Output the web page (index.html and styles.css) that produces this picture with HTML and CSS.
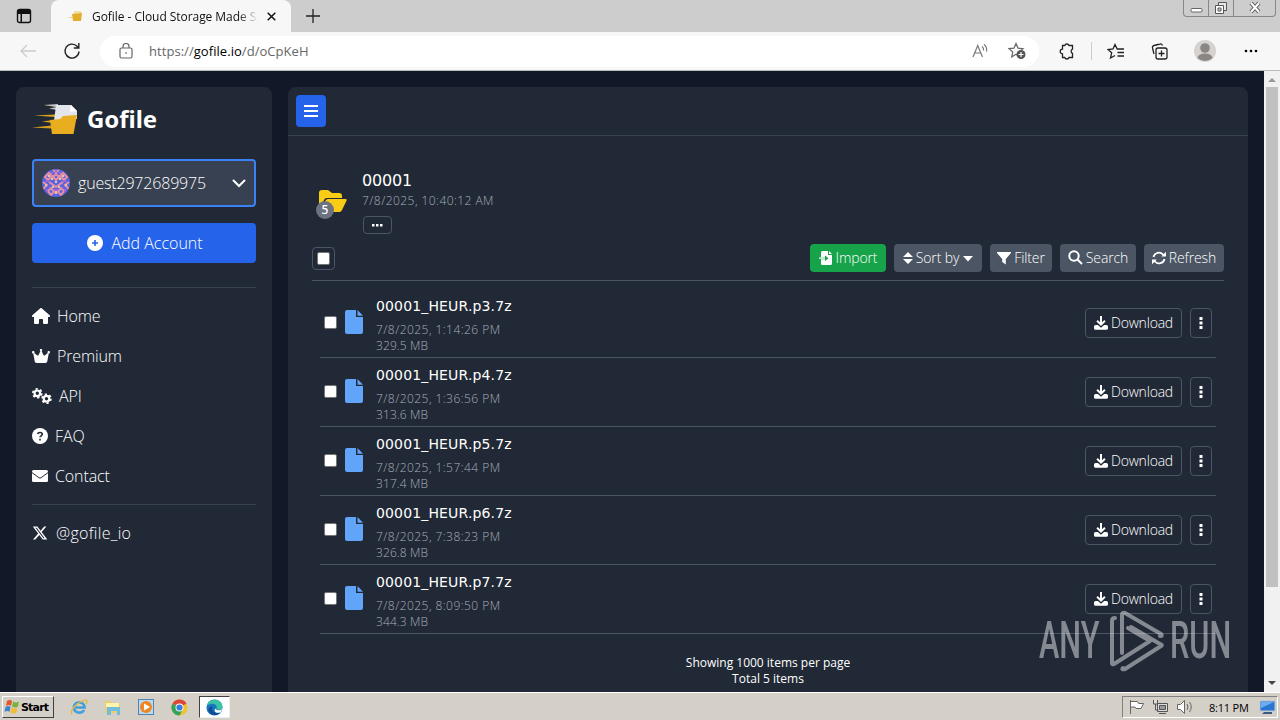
FILE: index.html
```html
<!DOCTYPE html>
<html lang="en">
<head>
    <meta charset="UTF-8">
    <meta name="viewport" content="width=device-width, initial-scale=1.0">
    <title>Gofile - Cloud Storage Made Simple</title>
    <link rel="stylesheet" href="styles.css">
</head>
<body>
    <!-- Shared icons -->
    <svg class="sprite">
        <symbol id="logo" viewBox="0 0 46 32">
            <path d="M12 2L26 2.400L24 4zM2 12.500L23 11.500V14zM10 18.500L21 17V20zM0 24.500L20 22.500V25.500z" fill="#d9a11d"/>
            <path d="M12 2L26 1V4zM17 5.500L25 4V7z" fill="#bfc5cd"/>
            <path d="M24 2H39L45 8V16L22 18z" fill="#e3e5ec"/>
            <path d="M39 2L38 9L45 8z" fill="#fff"/>
            <path d="M18 17L28 16L31 13L45 12L41.500 31H20z" fill="#e9ae20"/>
        </symbol>
        <symbol id="file" viewBox="0 0 18 24">
            <path d="M2 0H11V7H18V22a2 2 0 0 1-2 2H2a2 2 0 0 1-2-2V2a2 2 0 0 1 2-2zM12.500 0L18 5.700H12.500z"/>
        </symbol>
        <symbol id="download" viewBox="0 0 14 14">
            <path d="M6 0h2v6.300l2.300-2.200 1.300 1.300L7 9.900 2.400 5.400l1.300-1.300L6 6.300zM1.600 9h2.300L7 11.700 10.100 9h2.300A1.600 1.600 0 0 1 14 10.600v1.600a1.600 1.600 0 0 1-1.600 1.600H1.600A1.600 1.600 0 0 1 0 12.200v-1.600A1.600 1.600 0 0 1 1.600 9z"/>
        </symbol>
        <symbol id="dots" viewBox="0 0 4 12">
            <path d="M.5 0h3v3h-3zM.5 4.500h3v3h-3zM.5 9h3v3h-3z"/>
        </symbol>
    </svg>

    <!-- Browser tabs -->
    <div class="tabs">
        <svg class="tab-menu" width="16" height="16" viewBox="0 0 16 16"><rect x="1.500" y="1.500" width="13" height="13" rx="2" fill="none" stroke="#111" stroke-width="1.400"/><path d="M1 2h14v4H6v9H4.500V6H1z" fill="#111"/></svg>
        <div class="tab">
            <svg width="14" height="12" viewBox="0 0 14 12"><path d="M5 1h7l1 3H5z" fill="#f0dfa8"/><path d="M3 4l10-1-1 8H4z" fill="#e2ad2d"/><path d="M0 7h4v1H0z" fill="#efd287"/></svg>
            <span class="tab-title">Gofile - Cloud Storage Made Si</span>
            <svg class="tab-close" width="9" height="9" viewBox="0 0 9 9"><path d="M.7.7l7.600 7.600M8.300.7L.7 8.300" stroke="#111" stroke-width="1.500"/></svg>
        </div>
        <svg class="tab-new" width="14" height="14" viewBox="0 0 14 14"><path d="M7 0v14M0 7h14" stroke="#222" stroke-width="1.300"/></svg>
        <div class="win-buttons">
            <span class="wb"><svg width="13" height="16" viewBox="0 0 13 16"><rect x="1" y="8.500" width="11" height="3.500" rx="1" fill="#fff" stroke="#666"/></svg></span>
            <span class="wb"><svg width="14" height="16" viewBox="0 0 14 16"><path d="M4.500 2.500h8v8h-8z" fill="#e8e8e8" stroke="#555"/><path d="M1.500 5.500h8v8h-8z" fill="#fff" stroke="#555"/><path d="M4 8h3v3H4z" fill="#ccc" stroke="#555"/></svg></span>
            <span class="wb wb-close"><svg width="14" height="16" viewBox="0 0 14 16"><path d="M3 3l8 9M11 3l-8 9" stroke="#555" stroke-width="4"/><path d="M3 3l8 9M11 3l-8 9" stroke="#fff" stroke-width="2"/></svg></span>
        </div>
    </div>

    <!-- Browser toolbar -->
    <div class="toolbar">
        <svg class="back" width="16" height="14" viewBox="0 0 16 14" fill="none" stroke="#ccc" stroke-width="1.300"><path d="M16 7H1M7 1L1 7l6 6"/></svg>
        <svg class="reload" width="18" height="18" viewBox="0 0 18 18" fill="none" stroke="#222" stroke-width="1.400"><path d="M16 9.500A7 7 0 1 1 14.300 4.500L15.800 6M15.800 1v5h-5"/></svg>
        <div class="address">
            <svg width="14" height="16" viewBox="0 0 14 16" fill="none" stroke="#666" stroke-width="1.200"><rect x="1" y="5" width="12" height="10" rx="1.500"/><path d="M4 5V3.500a3 3 0 0 1 6 0V5"/><path d="M6.300 10h1.400" stroke-width="1.500"/></svg>
            <span class="url">https://<b>gofile.io</b>/d/oCpKeH</span>
            <svg width="17" height="16" viewBox="0 0 17 16" fill="none" stroke="#777" stroke-width="1.200"><path d="M1 14L5.700 2.500 10.500 14M2.700 10h6M10 3.500a4 4 0 0 1 1.500 4M12 1.500a7 7 0 0 1 2.500 7"/></svg>
            <svg class="star" width="18" height="18" viewBox="0 0 18 18"><path d="M8 1.500l2 4.600 5 .5-3.800 3.300 1 4.800L8 12.200 3.700 15l1.100-5L1 6.600l5-.5z" fill="none" stroke="#666" stroke-width="1.200"/><circle cx="13" cy="12.500" r="4.500" fill="#555"/><path d="M13 10v5M10.500 12.500h5" stroke="#fff" stroke-width="1.200"/></svg>
        </div>
        <svg class="ext" width="16" height="17" viewBox="0 0 16 17" fill="none" stroke="#222" stroke-width="1.300"><path d="M3.500 2.500h2.200a2.300 2.300 0 0 1 4.300 0h3.500v3.700a2.300 2.300 0 0 0 0 4.200v4.100H10a2.300 2.300 0 0 1-4.300 0H3.500v-3.700a2.300 2.300 0 0 1 0-4.600z"/></svg>
        <span class="bar-sep"></span>
        <svg class="fav" width="18" height="17" viewBox="0 0 18 17" fill="none" stroke="#222" stroke-width="1.300"><path d="M11 6h-.8L8 1.500 6 6l-5 .6 3.700 3.200L3.500 15 8 12.500M10 6h7M10.500 9.500H17M10.500 13H17"/></svg>
        <svg class="coll" width="17" height="17" viewBox="0 0 17 17" fill="none" stroke="#222" stroke-width="1.300"><path d="M3 11L1.500 5A2 2 0 0 1 3 2.500L9 1a2 2 0 0 1 2.500 1.500"/><rect x="5" y="5" width="11" height="11" rx="2"/><path d="M10.500 7.500v6M7.500 10.500h6"/></svg>
        <svg class="profile" width="22" height="22" viewBox="0 0 22 22"><circle cx="11" cy="11" r="11" fill="#d5d2cf"/><circle cx="11" cy="8" r="4.800" fill="#898684"/><path d="M3.500 18a7.500 4.500 0 0 1 15 0 11 11 0 0 1-15 0z" fill="#898684"/></svg>
        <svg width="14" height="4" viewBox="0 0 14 4"><circle cx="2" cy="2" r="1.300"/><circle cx="7" cy="2" r="1.300"/><circle cx="12" cy="2" r="1.300"/></svg>
    </div>

    <!-- Web page -->
    <div class="page">
        <aside class="sidebar">
            <div class="brand"><svg width="46" height="32"><use href="#logo"/></svg><h1>Gofile</h1></div>
            <div class="account">
                <svg width="28" height="28" viewBox="0 0 28 28">
                    <clipPath id="round"><circle cx="14" cy="14" r="14"/></clipPath>
                    <g clip-path="url(#round)">
                        <path d="M0 0h28v28H0z" fill="#5a64e2"/>
                        <g fill="none" stroke="#e58fa2" stroke-width="2">
                            <path d="M3 8l4-4 3 3-4 4zM25 8l-4-4-3 3 4 4zM14 5l3 3-3 3-3-3zM1 13l4 3-4 4M27 13l-4 3 4 4M7 13l7 5 7-5M6 22l3-3 3 4-3 3zM22 22l-3-3-3 4 3 3zM11 1l3 2 3-2"/>
                        </g>
                        <path d="M6 6h2v2H6zM20 6h2v2h-2zM13 12h2v2h-2zM3 15h2v2H3zM23 15h2v2h-2zM10 17h2v2h-2zM16 17h2v2h-2zM13 22h2v3h-2zM9 9h2v2H9zM17 9h2v2h-2z" fill="#e7c3a4"/>
                        <path d="M13 1h2v2h-2zM9 3h2v2H9zM17 3h2v2h-2zM4 11h3v2H4zM21 11h3v2h-3zM12 20h4v2h-4zM4 20h2v3H4zM22 20h2v3h-2z" fill="#a863d5"/>
                    </g>
                </svg>
                <span class="account-name">guest2972689975</span>
                <svg width="14" height="9" viewBox="0 0 14 9" fill="none" stroke="#fff" stroke-width="2" stroke-linecap="round"><path d="M1.500 1.500L7 7l5.500-5.500"/></svg>
            </div>
            <div class="add-account">
                <svg width="16" height="16" viewBox="0 0 16 16"><circle cx="8" cy="8" r="8" fill="#fff"/><path d="M8 5v6M5 8h6" stroke="#2563eb" stroke-width="1.600"/></svg>
                <span>Add Account</span>
            </div>
            <nav>
                <a><svg width="18" height="16" viewBox="0 0 576 512"><path d="M575.8 255.5c0 18-15 32.100-32 32.100h-32V472c0 22.100-17.900 40-40 40H392c-22.100 0-40-17.900-40-40v-88c0-17.700-14.300-32-32-32h-64c-17.700 0-32 14.300-32 32v88c0 22.100-17.900 40-40 40h-80c-22.100 0-40-17.900-40-40V287.600H32c-18 0-32-14-32-32.100 0-9 3-17 10-24L266.400 8c7-7 15-8 22-8s15 2 21 7l255.400 224.500c8 7 12 15 11 24z"/></svg><span>Home</span></a>
                <a><svg width="18" height="16" viewBox="0 0 576 512"><path d="M309 106c11.400-7 19-19.700 19-34 0-22.100-17.900-40-40-40s-40 17.900-40 40c0 14.400 7.600 27 19 34l-57.300 114.600c-9.100 18.200-32.700 23.400-48.600 10.700L72 160c5-6.700 8-15 8-24 0-22.100-17.900-40-40-40S0 113.900 0 136s17.900 40 40 40h.7l45.700 251.400c5.500 30.400 32 52.600 63 52.600h277.200c30.900 0 57.400-22.100 63-52.600L535.300 176h.7c22.100 0 40-17.900 40-40s-17.900-40-40-40-40 17.900-40 40c0 9 3 17.300 8 24l-89.100 71.300c-15.900 12.700-39.500 7.500-48.600-10.700z"/></svg><span>Premium</span></a>
                <a><svg class="line-icon" width="20" height="16" viewBox="0 0 20 16" stroke="#fff"><circle cx="5.300" cy="5.300" r="2.800" stroke-width="2.200"/><circle cx="5.300" cy="5.300" r="4.500" stroke-width="1.600" stroke-dasharray="2.300 2.410"/><circle cx="14.500" cy="10.700" r="2.800" stroke-width="2.200"/><circle cx="14.500" cy="10.700" r="4.500" stroke-width="1.600" stroke-dasharray="2.300 2.410"/></svg><span>API</span></a>
                <a><svg width="16" height="16" viewBox="0 0 16 16"><circle cx="8" cy="8" r="8"/><path d="M5.700 6.200C6 3.800 10.300 3.900 10.300 6.300 10.300 7.700 8 7.900 8 9.300M8 10.700v1.700" fill="none" stroke="#212936" stroke-width="1.600"/></svg><span>FAQ</span></a>
                <a><svg width="16" height="16" viewBox="0 0 16 16"><rect y="2" width="16" height="12" rx="1.500"/><path d="M0 4.600l6.900 5.100q1.100.8 2.200 0L16 4.600" fill="none" stroke="#212936" stroke-width="1"/></svg><span>Contact</span></a>
            </nav>
            <a class="social"><svg width="16" height="16" viewBox="0 0 16 16"><path fill-rule="evenodd" d="M12.200 1.500h2.200L9.600 7l5.700 7.500h-4.500L7.300 9.900l-4 4.600H1l5.200-5.900L.8 1.500h4.600l3.200 4.200zM11.400 13.200h1.200L4.700 2.800H3.400z"/></svg><span>@gofile_io</span></a>
        </aside>

        <main>
            <header><div class="menu"><svg width="14" height="12" viewBox="0 0 14 12"><path d="M0 0h14v2H0zM0 5h14v2H0zM0 10h14v2H0z"/></svg></div></header>
            <div class="content">
                <div class="folder">
                    <div class="folder-icon">
                        <svg width="28" height="23" viewBox="0 0 28 23"><path d="M0 20V3a3 3 0 0 1 3-3h6l4 3h7a3 3 0 0 1 3 3v2H8a3 3 0 0 0-3 2zM1 22l5.500-11.500A3 3 0 0 1 9 9h17.500q1.800 0 1 1.800L23 20a3 3 0 0 1-3 2z" fill="#facc15"/></svg>
                        <span class="count">5</span>
                    </div>
                    <div>
                        <h2>00001</h2>
                        <p class="folder-date">7/8/2025, 10:40:12 AM</p>
                        <span class="more"><svg width="11" height="3" viewBox="0 0 11 3"><path d="M0 0h2.500v2.500H0zM4 0h2.500v2.500H4zM8 0h2.500v2.500H8z"/></svg></span>
                    </div>
                </div>
                <div class="actions">
                    <span class="select-all"><i class="check"></i></span>
                    <span class="btn import"><svg width="14" height="14" viewBox="0 0 14 14"><path d="M3.500 0H9v4h4v8.500a1.500 1.500 0 0 1-1.500 1.500h-8A1.500 1.500 0 0 1 2 12.500V8.200h4V10l3.500-2.700L6 4.500v1.800H2V1.500A1.500 1.500 0 0 1 3.500 0zM10 0l3 3h-3zM0 6.500h6v1.300H0z"/></svg>Import</span>
                    <span class="btn sort"><svg width="10" height="14" viewBox="0 0 10 14"><path d="M5 1l5 5H0zM5 13l5-5H0z"/></svg>Sort by<svg class="caret" width="10" height="6" viewBox="0 0 10 6"><path d="M0 0h10L5 5.500z"/></svg></span>
                    <span class="btn filter"><svg width="14" height="14" viewBox="0 0 14 14"><path d="M0 1h14v1L8.800 8v5.500L5.200 11V8L0 2z"/></svg>Filter</span>
                    <span class="btn search"><svg class="line-icon" width="15" height="15" viewBox="0 0 15 15" stroke="#fff" stroke-width="2"><circle cx="6" cy="6" r="4.700"/><path d="M9.500 9.500L14 14"/></svg>Search</span>
                    <span class="btn refresh"><svg width="14" height="14" viewBox="0 0 14 14"><path d="M1.500 6A5.500 5.500 0 0 1 11 3.500L12 4.500M12.500 8A5.500 5.500 0 0 1 3 10.500L2 9.500" fill="none" stroke="#fff" stroke-width="1.800"/><path d="M14 .8V5.500H9.300zM0 13.200V8.500h4.700z"/></svg>Refresh</span>
                </div>
                <div class="files">
                    <div class="row">
                        <i class="check"></i>
                        <svg class="file-icon" width="18" height="24"><use href="#file"/></svg>
                        <div class="info"><h3>00001_HEUR.p3.7z</h3><p class="date">7/8/2025, 1:14:26 PM</p><p>329.5 MB</p></div>
                        <span class="outline dl"><svg width="14" height="14"><use href="#download"/></svg>Download</span>
                        <span class="outline kebab"><svg width="4" height="12"><use href="#dots"/></svg></span>
                    </div>
                    <div class="row">
                        <i class="check"></i>
                        <svg class="file-icon" width="18" height="24"><use href="#file"/></svg>
                        <div class="info"><h3>00001_HEUR.p4.7z</h3><p class="date">7/8/2025, 1:36:56 PM</p><p>313.6 MB</p></div>
                        <span class="outline dl"><svg width="14" height="14"><use href="#download"/></svg>Download</span>
                        <span class="outline kebab"><svg width="4" height="12"><use href="#dots"/></svg></span>
                    </div>
                    <div class="row">
                        <i class="check"></i>
                        <svg class="file-icon" width="18" height="24"><use href="#file"/></svg>
                        <div class="info"><h3>00001_HEUR.p5.7z</h3><p class="date">7/8/2025, 1:57:44 PM</p><p>317.4 MB</p></div>
                        <span class="outline dl"><svg width="14" height="14"><use href="#download"/></svg>Download</span>
                        <span class="outline kebab"><svg width="4" height="12"><use href="#dots"/></svg></span>
                    </div>
                    <div class="row">
                        <i class="check"></i>
                        <svg class="file-icon" width="18" height="24"><use href="#file"/></svg>
                        <div class="info"><h3>00001_HEUR.p6.7z</h3><p class="date">7/8/2025, 7:38:23 PM</p><p>326.8 MB</p></div>
                        <span class="outline dl"><svg width="14" height="14"><use href="#download"/></svg>Download</span>
                        <span class="outline kebab"><svg width="4" height="12"><use href="#dots"/></svg></span>
                    </div>
                    <div class="row">
                        <i class="check"></i>
                        <svg class="file-icon" width="18" height="24"><use href="#file"/></svg>
                        <div class="info"><h3>00001_HEUR.p7.7z</h3><p class="date">7/8/2025, 8:09:50 PM</p><p>344.3 MB</p></div>
                        <span class="outline dl"><svg width="14" height="14"><use href="#download"/></svg>Download</span>
                        <span class="outline kebab"><svg width="4" height="12"><use href="#dots"/></svg></span>
                    </div>
                </div>
                <div class="summary">Showing 1000 items per page<br>Total 5 items</div>
            </div>
        </main>

        <div class="scrollbar">
            <svg width="8" height="5" viewBox="0 0 8 5"><path d="M0 5l4-4 4 4z" fill="#999"/></svg>
            <div class="thumb"></div>
            <svg width="8" height="5" viewBox="0 0 8 5"><path d="M0 0h8L4 4z" fill="#444"/></svg>
        </div>
    </div>

    <!-- Taskbar -->
    <div class="taskbar">
        <div class="start">
            <svg width="16" height="16" viewBox="0 0 16 16"><path d="M3 2q3-2 5 0L7 7Q5 5 2 7z" fill="#e2562c"/><path d="M9 2.500q3 2 6 0L14 7.500q-3 2-6 0z" fill="#78b33c"/><path d="M1.500 8q3-2 5 0l-1 5q-2-2-5 0z" fill="#3f83cf"/><path d="M7.500 8.500q3 2 6 0l-1 5q-3 2-6 0z" fill="#f3bd33"/></svg>
            <span>Start</span>
        </div>
        <svg class="ie" width="18" height="18" viewBox="0 0 18 18" fill="none"><path d="M4 9.500h10.500C14.500 3 4 2.500 4 9.500c0 6 8 6.500 10 2.500" stroke="#41a0dc" stroke-width="2.700"/><path d="M2 16C-2 11 15-1 17 3q.5 1-1 3" stroke="#e3b93c" stroke-width="1.300"/></svg>
        <svg class="explorer" width="18" height="18" viewBox="0 0 18 18"><path d="M1 3h6l1 2h8v10H1z" fill="#e9cf6e"/><path d="M2 5h13v4H2z" fill="#fff3ad"/><path d="M3 9h13v8h-3v-4H7v4H3z" fill="#70bddd"/></svg>
        <svg class="player" width="16" height="18" viewBox="0 0 16 18"><rect x=".5" y="1.500" width="15" height="15" fill="#b8d9ef" stroke="#5084b5"/><circle cx="8" cy="9" r="6" fill="#ef8626"/><path d="M6 5.500l6 3.500-6 3.500z" fill="#fff"/></svg>
        <svg class="chrome" width="17" height="17" viewBox="0 0 18 18"><circle cx="9" cy="9" r="8.500" fill="#efc52e"/><path d="M9 9L1.600 4.750A8.500 8.500 0 0 1 16.400 4.750z" fill="#dc473a"/><path d="M9 9L1.600 4.750A8.500 8.500 0 0 0 9 17.500L12.500 11z" fill="#35a15a"/><circle cx="9" cy="9" r="4.200" fill="#fff"/><circle cx="9" cy="9" r="3.300" fill="#387de0"/></svg>
        <div class="active-app"><svg width="17" height="17" viewBox="0 0 18 18"><circle cx="9" cy="9" r="8.500" fill="#1975be"/><path d="M1 7C2-1 17-2 17.500 8c0 4-5 4-6.500 2 2-4-4-7-10-3z" fill="#3ac4a4"/><path d="M7 8c-2 4 1 8 8 6-5 6-14 2-12-4q1-2 4-2z" fill="#124b93"/><path d="M10 10c2 3 6 2 7.300 0l-1.500 4C10 16 8 13 10 10z" fill="#fff"/></svg></div>
        <div class="tray">
            <svg width="17" height="16" viewBox="0 0 17 16" fill="#fff" stroke="#666"><path d="M2.500 1v14M2.500 2.500h7l1 2h5l-2.500 5H8L7 8H2.500z"/></svg>
            <svg class="net" width="17" height="16" viewBox="0 0 17 16" fill="#ddd" stroke="#555"><path d="M5.500 4.500h10v8h-10zM7 14.500h7M1.500 1v4h4V1M3.500 5v6h3"/><path d="M7.500 6.500h6v4h-6z" fill="#999"/></svg>
            <svg class="vol" width="17" height="16" viewBox="0 0 17 16" fill="#fff" stroke="#666"><path d="M1.500 5.500h3l4-4v13l-4-4h-3z"/><path d="M11 5q2 3 0 6M13.500 3q3.500 5 0 10" fill="none"/></svg>
            <span class="clock">8:11 PM</span>
            <svg width="17" height="16" viewBox="0 0 17 16"><path d="M1 2h15v10H1z" fill="#2875d2" stroke="#b9c8d8"/><path d="M2 3h13L2 9z" fill="#6cacf0"/><path d="M5 13h8v2H3z" fill="#385b86"/></svg>
        </div>
    </div>

    <!-- Watermark -->
    <div class="watermark">
        <span class="wm-any">ANY</span>
        <svg width="56" height="62" viewBox="0 0 56 62" fill="none" stroke="#fff" stroke-width="4" stroke-linejoin="round" stroke-linecap="round"><path d="M5 8Q2 8 2 11V53Q2 55 4 54L40 31L18 18M12 43V5Q12 2 15 3L51 24Q53 26 50 26M13 58Q11 60 15 59L51 36Q53 35 50 34L21 17"/></svg>
        <span class="wm-run">RUN</span>
    </div>
</body>
</html>
```
FILE: styles.css
```css
* {
    box-sizing: border-box;
}
body {
    width: 1280px;
    height: 720px;
    margin: 0;
    overflow: hidden;
    font-family: "Open Sans", "Noto Sans", sans-serif;
    background: #111827;
    color: #fff;
}
h1, h2, h3, p {
    margin: 0;
}
svg {
    flex: none;
    display: block;
}
.sprite {
    display: none;
}

/* Browser */
.tabs {
    height: 32px;
    display: flex;
    align-items: center;
    background: #cdcdcd;
}
.tab-menu {
    margin: 0 19px 0 16px;
}
.tab {
    width: 240px;
    height: 32px;
    padding: 0 15px 0 18px;
    display: flex;
    align-items: center;
    background: #f7f7f7;
    border-radius: 8px 8px 0 0;
    color: #111;
}
.tab-title {
    width: 166px;
    margin-left: 9px;
    margin-right: 9px;
    white-space: nowrap;
    font: 12px "Open Sans", sans-serif;
    letter-spacing: -0.05px;
    -webkit-mask-image: linear-gradient(90deg, #000 88%, transparent);
}
.tab-new {
    margin-left: 15px;
}
.win-buttons {
    width: 93px;
    height: 17px;
    margin: 0 4px 15px auto;
    display: flex;
    border: 1px solid #888;
    border-top: 0;
    border-radius: 0 0 4px 4px;
}
.wb {
    width: 25px;
    display: flex;
    justify-content: center;
    border-right: 1px solid #888;
}
.wb-close {
    flex: 1;
    border: 0;
}
.toolbar {
    height: 39px;
    display: flex;
    align-items: center;
    padding-left: 20px;
    background: #f7f7f7;
    border-bottom: 1px solid #bbb;
}
.reload {
    margin: 0 19px 0 27px;
}
.address {
    width: 939px;
    height: 31px;
    margin-right: 20px;
    padding: 0 13px 0 19px;
    display: flex;
    align-items: center;
    background: #fff;
    border-radius: 16px;
}
.url {
    flex: 1;
    margin-left: 16px;
    color: #666;
    font-size: 13px;
    letter-spacing: 0.05px;
}
.url b {
    color: #000;
    font-weight: 400;
}
.star {
    margin-left: 19px;
}
.bar-sep {
    width: 1px;
    height: 18px;
    margin: 0 15px 0 16px;
    background: #ccc;
}
.coll {
    margin: 0 26px;
}
.profile {
    margin-right: 28px;
}

/* Page */
.page {
    height: 621px;
    display: flex;
    background: #111827;
}
.sidebar {
    width: 256px;
    margin: 16px 16px 0;
    padding: 16px;
    background: #212936;
    border-radius: 8px 8px 0 0;
}
.brand {
    height: 32px;
    display: flex;
    align-items: center;
}
.brand h1 {
    margin: 0 0 2px 9px;
    font: bold 24px "Noto Sans", sans-serif;
    letter-spacing: -0.05px;
}
.account {
    height: 48px;
    margin-top: 24px;
    padding: 0 8px;
    display: flex;
    align-items: center;
    border: 2px solid #3b82f6;
    border-radius: 4px;
    background: #374151;
    font-size: 16px;
    font-weight: 300;
}
.account-name {
    flex: 1;
    margin-left: 8px;
    letter-spacing: -0.18px;
}
.add-account {
    height: 40px;
    margin-top: 16px;
    display: flex;
    align-items: center;
    justify-content: center;
    gap: 8px;
    padding-left: 2px;
    background: #2563eb;
    border-radius: 4px;
    font-size: 16px;
    font-weight: 300;
}
nav {
    margin-top: 24px;
    padding: 8px 0;
    border-top: 1px solid #374151;
    border-bottom: 1px solid #374151;
}
nav a, .social {
    height: 40px;
    display: flex;
    align-items: center;
    gap: 7px;
    font-size: 16px;
    font-weight: 300;
    letter-spacing: -0.12px;
}
nav svg, .social svg, .menu svg, .more svg, .btn svg, .outline svg {
    fill: #fff;
}
nav .line-icon, .btn .line-icon {
    fill: none;
}
.social {
    margin-top: 8px;
    gap: 8px;
    letter-spacing: 0.3px;
}
main {
    width: 960px;
    margin-top: 16px;
    background: #212936;
    border-radius: 8px 8px 0 0;
}
main header {
    height: 49px;
    padding: 8px;
    border-bottom: 1px solid #374151;
}
.menu {
    width: 30px;
    height: 32px;
    display: flex;
    align-items: center;
    justify-content: center;
    background: #2563eb;
    border-radius: 4px;
}
.content {
    padding: 32px 24px 0;
}
.folder {
    height: 76px;
    display: flex;
}
.folder-icon {
    position: relative;
    width: 50px;
    padding: 22px 0 0 7px;
}
.count {
    position: absolute;
    left: 4px;
    top: 33px;
    width: 18px;
    height: 18px;
    border-radius: 50%;
    background: #6b7280;
    font: 500 12px/18px "Noto Sans", sans-serif;
    text-align: center;
}
.folder h2 {
    height: 25px;
    font: 400 16px/26px "DejaVu Sans", sans-serif;
    letter-spacing: -0.2px;
}
.folder-date {
    height: 16px;
    color: #a7aeb9;
    font-size: 12px;
    font-weight: 300;
    line-height: 16px;
    letter-spacing: 0.45px;
}
.more {
    width: 29px;
    height: 18px;
    margin: 7px 0 0 1px;
    display: flex;
    align-items: center;
    justify-content: center;
    border: 1px solid #4b5563;
    border-radius: 4px;
}
.actions {
    height: 37px;
    display: flex;
    align-items: flex-start;
    gap: 8px;
    border-bottom: 1px solid #4b5563;
}
.check {
    width: 13px;
    height: 13px;
    background: #fff;
    border: 1px solid #767676;
    border-radius: 2px;
}
.select-all {
    width: 23px;
    height: 23px;
    margin: 3px auto 0 0;
    display: flex;
    align-items: center;
    justify-content: center;
    border: 1px solid #4b5563;
    border-radius: 4px;
}
.btn {
    height: 28px;
    padding-bottom: 1px;
    display: flex;
    align-items: center;
    justify-content: center;
    gap: 3px;
    background: #4b5563;
    border-radius: 4px;
    font-size: 14px;
    font-weight: 300;
    letter-spacing: -0.12px;
    white-space: nowrap;
}
.import {
    width: 76px;
    background: #16a34a;
}
.sort {
    width: 88px;
}
.caret {
    margin: 2px 0 0 1px;
}
.filter {
    width: 62px;
}
.search {
    width: 76px;
}
.refresh {
    width: 80px;
}
.files {
    padding: 8px 8px 0;
}
.row {
    height: 69px;
    padding: 0 4px;
    display: flex;
    align-items: center;
    border-bottom: 1px solid #4b5563;
}
.row .check {
    margin-bottom: 2px;
}
.file-icon {
    margin: 0 13px 2px 8px;
    fill: #60a5fa;
}
.info {
    flex: 1;
    height: 64px;
    color: #a7aeb9;
    font-size: 12px;
    font-weight: 300;
    line-height: 16px;
    letter-spacing: 0.1px;
}
.info h3 {
    height: 31px;
    color: #fff;
    font: 500 14px/30px "DejaVu Sans", sans-serif;
    letter-spacing: 0.15px;
}
.date {
    letter-spacing: 0.45px;
}
.outline {
    height: 30px;
    display: flex;
    align-items: center;
    justify-content: center;
    gap: 3px;
    border: 1px solid #4b5563;
    border-radius: 4px;
    font-size: 14px;
    font-weight: 300;
}
.dl {
    width: 97px;
    margin-right: 8px;
    padding-bottom: 1px;
    letter-spacing: -0.2px;
}
.kebab {
    width: 22px;
}
.summary {
    margin-top: 21px;
    font-size: 12px;
    line-height: 16px;
    text-align: center;
}
.scrollbar {
    width: 16px;
    margin-left: 16px;
    padding: 6px 0 6px;
    display: flex;
    flex-direction: column;
    align-items: center;
    background: #f1f1f1;
}
.thumb {
    width: 12px;
    height: 500px;
    margin: 5px 0 auto;
    background: #c1c1c1;
}

/* Desktop */
.taskbar {
    height: 28px;
    display: flex;
    align-items: center;
    padding: 1px 2px 0;
    background: #d4d0c8;
    border-top: 1px solid #fff;
    color: #000;
}
.start {
    width: 52px;
    height: 22px;
    padding: 0 1px;
    display: flex;
    align-items: center;
    gap: 1px;
    border: 1px solid #fff;
    border-right-color: #404040;
    border-bottom-color: #404040;
    font: bold 11px "DejaVu Sans", sans-serif;
    letter-spacing: -0.8px;
}
.ie {
    margin: 0 16px 0 16px;
}
.player {
    margin: 0 17px 0 16px;
}
.active-app {
    width: 31px;
    height: 22px;
    margin-left: 11px;
    display: flex;
    align-items: center;
    justify-content: center;
    background: #fff;
    border: 1px solid #404040;
    border-right-color: #eee;
    border-bottom-color: #eee;
}
.tray {
    width: 156px;
    height: 22px;
    margin-left: auto;
    padding-left: 5px;
    display: flex;
    align-items: center;
    border: 1px solid #808080;
    border-right-color: #fff;
    border-bottom-color: #fff;
    font: 11px "Open Sans", sans-serif;
}
.net {
    margin: 0 7px;
}
.clock {
    width: 40px;
    margin: 0 10px 0 16px;
    letter-spacing: -0.2px;
    white-space: nowrap;
}
.watermark {
    position: absolute;
    left: 1039px;
    top: 610px;
    width: 196px;
    height: 62px;
    display: flex;
    align-items: center;
    opacity: 0.45;
}
.watermark span {
    font: 500 52px/62px Roboto, sans-serif;
    transform: scaleX(0.59);
    transform-origin: 0 50%;
}
.wm-any {
    width: 71px;
}
.wm-run {
    width: 60px;
    margin-left: 4px;
}
```
